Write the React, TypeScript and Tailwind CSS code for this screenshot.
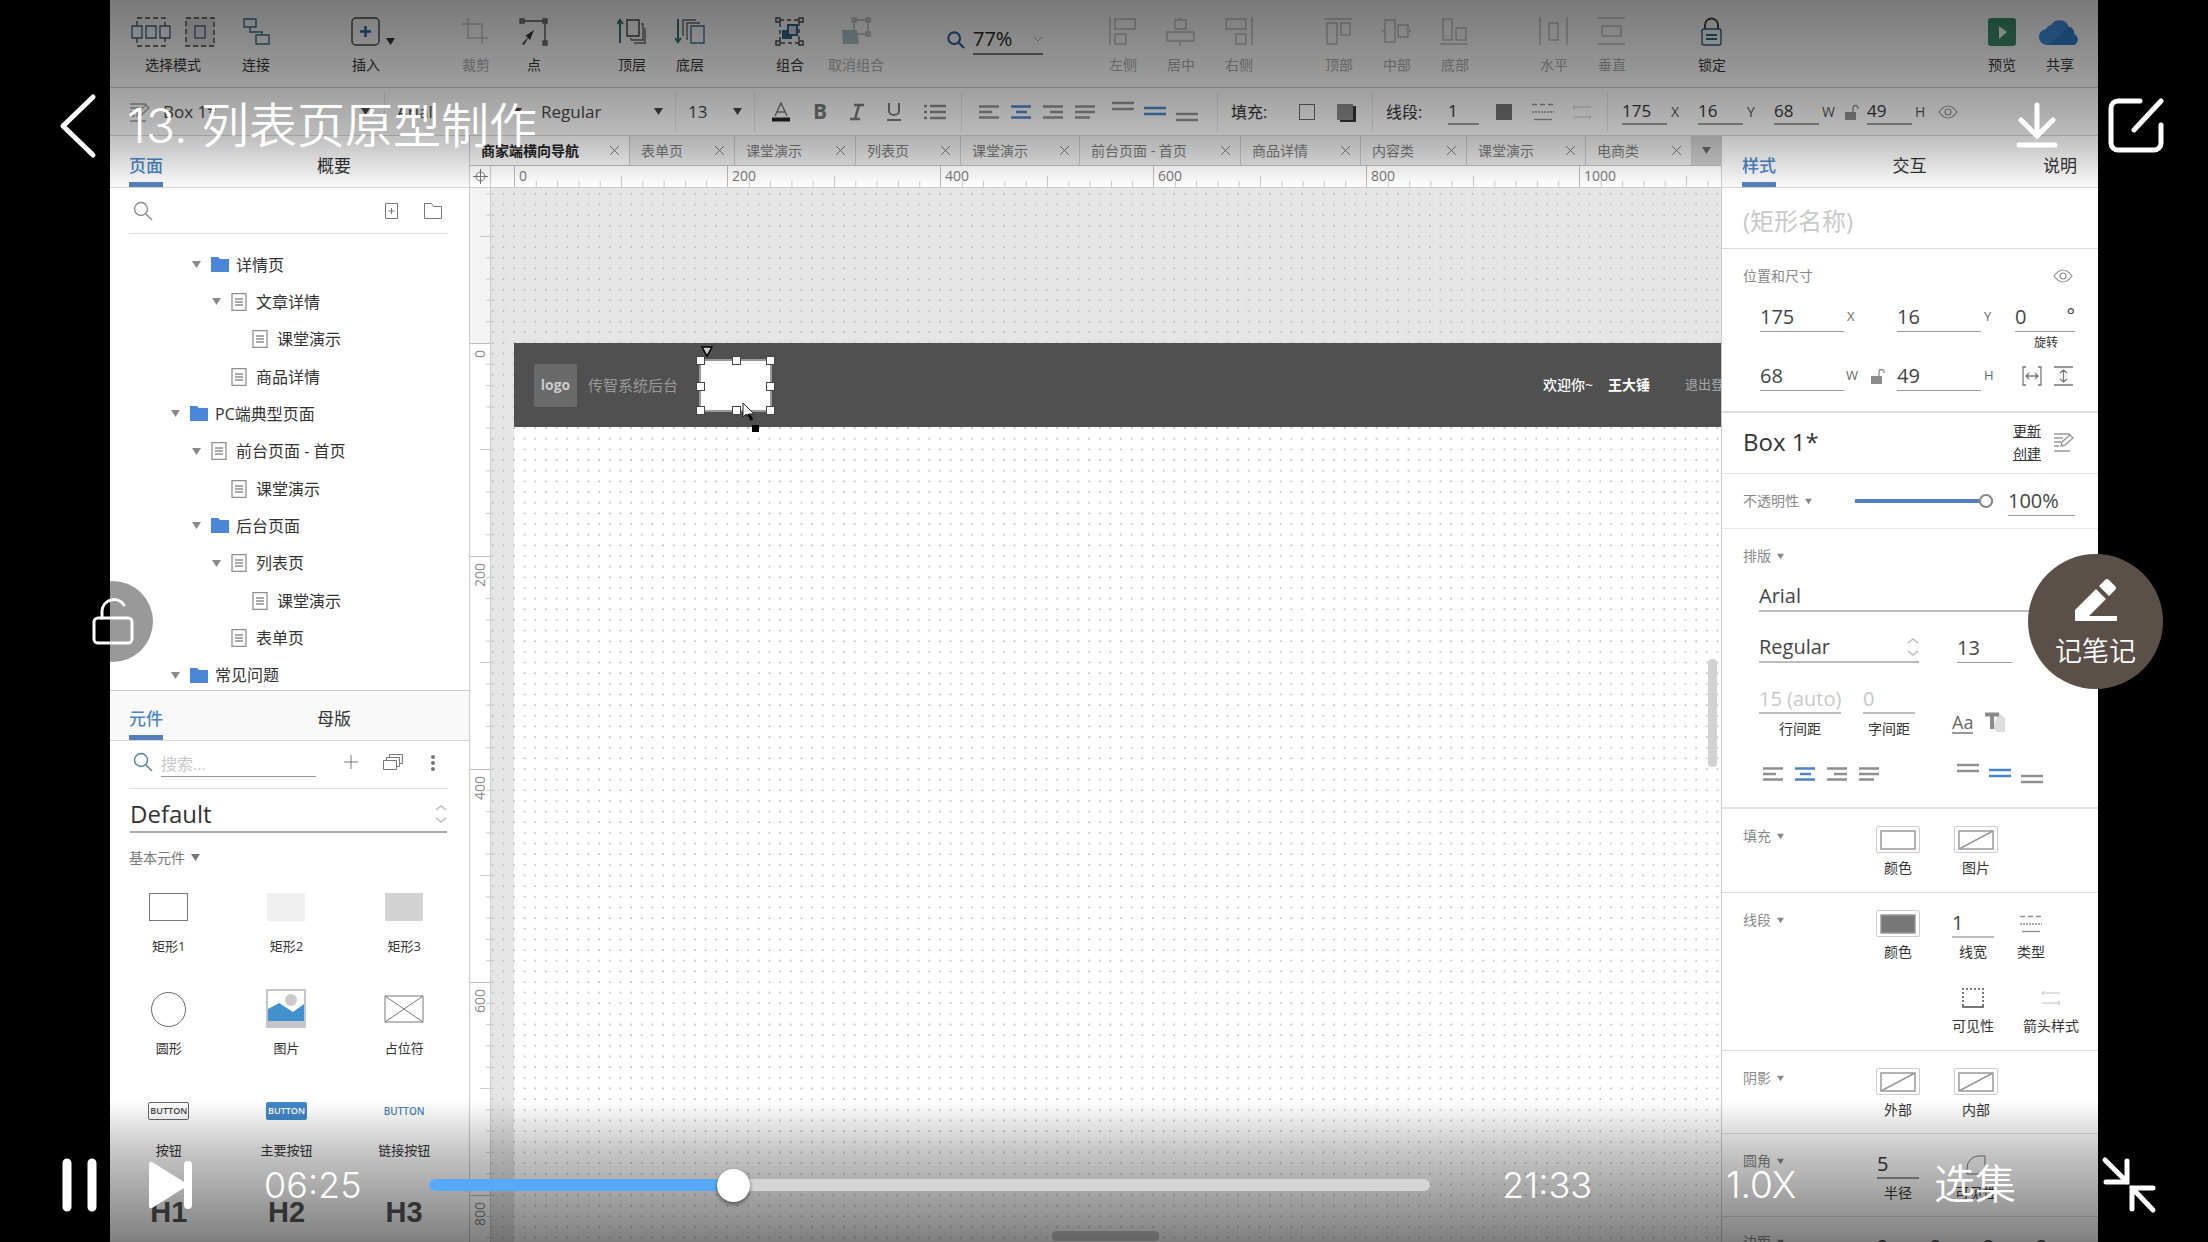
import React, { useState } from "react";

const UI_FONT = "font-['Open_Sans','Noto_Sans_CJK_SC',sans-serif]";
const PLAYER_FONT = "font-['Inter','Noto_Sans_CJK_SC',sans-serif]";

const GREY = "#8c8c8c";
const BLUE = "#4a84c4";

/* ---------- small drawings ---------- */

const Caret = ({ className = "" }: { className?: string }) => (
    <svg width="9" height="7" viewBox="0 0 9 7" className={`shrink-0 pointer-events-none ${className}`} aria-hidden>
        <path d="M0 0h9L4.5 7z" fill="currentColor" />
    </svg>
);

const UpDown = () => (
    <svg width="12" height="20" viewBox="0 0 12 20" fill="none" stroke="#bbb" strokeWidth="1.5" className="shrink-0 pointer-events-none" aria-hidden>
        <path d="M1 6l5-4 5 4M1 14l5 4 5-4" />
    </svg>
);

const EyeIcon = () => (
    <svg width="20" height="14" viewBox="0 0 20 14" fill="none" stroke={GREY} strokeWidth="1.2" aria-hidden>
        <path d="M1 7q9-12 18 0q-9 12-18 0z" />
        <circle cx="10" cy="7" r="3" />
    </svg>
);

const SmallLock = () => (
    <svg width="14" height="16" viewBox="0 0 14 16" aria-hidden>
        <rect x="0" y="8" width="11" height="8" fill={GREY} />
        <path d="M8 8V4a2.5 2.5 0 0 1 5 0v1" fill="none" stroke={GREY} strokeWidth="1.3" />
    </svg>
);

const StylePencil = () => (
    <svg width="22" height="20" viewBox="0 0 22 20" fill="none" stroke="#999" strokeWidth="1.4" aria-hidden>
        <path d="M1 2h16M1 6h9M1 10h7M1 14h5M1 19h16M8 14l1-4 8-7 3 3-8 7z" />
    </svg>
);

const SearchIcon = ({ color = GREY, size = 20, width = 1.4 }: { color?: string; size?: number; width?: number }) => (
    <svg width={size} height={size} viewBox="0 0 20 20" fill="none" stroke={color} strokeWidth={width} aria-hidden>
        <circle cx="8" cy="8" r="6.5" />
        <path d="M13 13l6 6" />
    </svg>
);

const FolderIcon = () => (
    <svg width="18" height="15" viewBox="0 0 18 15" aria-hidden>
        <path d="M0 0h7l2 2h9v13H0z" fill="#4a87d6" />
    </svg>
);

const PageIcon = () => (
    <svg width="16" height="18" viewBox="0 0 16 18" fill="none" stroke="#8f8f8f" strokeWidth="1.3" aria-hidden>
        <path d="M1 .7h14v16.600H1zM4 6h8M4 9h8M4 12h8" />
    </svg>
);

type AlignKind = "left" | "center" | "right" | "justify";
const alignPaths: Record<AlignKind, string> = {
    left: "M0 1.5h20M0 7h13M0 12.5h20",
    center: "M0 1.5h20M5 7h11M0 12.5h20",
    right: "M0 1.5h20M7 7h13M0 12.5h20",
    justify: "M0 1.5h20M0 7h20M0 12.5h15",
};
const AlignIcon = ({ kind }: { kind: AlignKind }) => (
    <svg width="20" height="14" viewBox="0 0 20 14" stroke={kind === "center" ? BLUE : "#8f8f8f"} strokeWidth="2.5" aria-hidden>
        <path d={alignPaths[kind]} />
    </svg>
);

type VAlignKind = "top" | "middle" | "bottom";
const valignY: Record<VAlignKind, number> = { top: 2, middle: 7, bottom: 13 };
const VAlignIcon = ({ kind }: { kind: VAlignKind }) => (
    <svg width="22" height="22" viewBox="0 0 22 22" stroke={kind === "middle" ? BLUE : "#8f8f8f"} strokeWidth="2.5" aria-hidden>
        <path d={`M0 ${valignY[kind]}h22M0 ${valignY[kind] + 6}h22`} />
    </svg>
);

const LineTypeIcon = () => (
    <svg width="22" height="18" viewBox="0 0 22 18" stroke={GREY} strokeWidth="1.3" aria-hidden>
        <path d="M0 1.5h22" strokeDasharray="5 3" />
        <path d="M0 9h22" strokeDasharray="2 1" />
        <path d="M2 16.5h18" />
    </svg>
);

const ArrowStyleIcon = () => (
    <svg width="20" height="14" viewBox="0 0 20 14" fill="none" stroke="#c0c0c0" aria-hidden>
        <path d="M1 2h18M3 0L1 2l2 2M1 12h18M17 10l2 2-2 2" />
    </svg>
);

/* ---------- top toolbar ---------- */

const toolIcons: Record<string, React.ReactNode> = {
    link: <path d="M3 2h12v8H3zM15 18h13v9H15zM9 10v5h12v3" stroke="#3c6b85" />,
    insert: (
        <>
            <rect x="1" y="1" width="27" height="27" rx="4" stroke="#444" />
            <path d="M14.500 9v11M9 14.500h11" stroke="#2c5f9e" strokeWidth="2.500" />
        </>
    ),
    crop: <path d="M7 1v20h20M1 7h20v20" stroke={GREY} />,
    point: (
        <>
            <path d="M3 4h23v22" stroke="#555" />
            <path d="M1 2h4v4H1zM24 2h4v4h-4zM24 24h4v4h-4z" fill="#777" stroke="#666" />
            <path d="M3 27l6-7-3-1 9-6-4 10-2-2-4 7z" fill="#333" stroke="none" />
        </>
    ),
    front: (
        <>
            <path d="M3 26V3M0 7l3-4 3 4" stroke="#2f7670" strokeWidth="2" />
            <path d="M10 3h12v16H10z" stroke="#444" />
            <path d="M24 7h2v16H14v-2M28 11v15H17" stroke="#666" />
        </>
    ),
    back: (
        <>
            <path d="M3 2v23M0 21l3 4 3-4" stroke="#2f7670" strokeWidth="2" />
            <path d="M16 9h13v17H16z" stroke="#3f6f95" />
            <path d="M13 22h-1V6h13M9 18H8V3h13" stroke="#666" />
        </>
    ),
    group: (
        <>
            <path d="M5 3h19v23H5z" stroke="#444" strokeDasharray="4 3" />
            <path d="M1 1h4v4H1zM24 1h4v4h-4zM1 24h4v4H1zM24 24h4v4h-4z" stroke="#444" />
            <path d="M7 13h10v9H7z" fill="#2d6787" stroke="none" />
            <path d="M13 8h9v10h-9z" stroke="#2d5d8d" strokeWidth="2" fill="#c8d4dc" />
        </>
    ),
    ungroup: (
        <>
            <path d="M13 3h14v14H13z" stroke="#777" />
            <path d="M1 13h15l2 14H2z" fill="#5d868d" stroke="none" />
            <path d="M11 1h4v4h-4zM25 1h4v4h-4zM25 15h4v4h-4z" stroke="#777" />
        </>
    ),
    aleft: <path d="M2 0v28M7 2h20v10H7zM7 17h11v10H7z" stroke="#808080" />,
    acenter: <path d="M14 0v2M9 3h11v9H9zM1 15h27v9H1zM14 25v4" stroke="#808080" />,
    aright: <path d="M28 0v28M2 2h20v10H2zM12 17h10v10H12z" stroke="#808080" />,
    atop: <path d="M0 2h28M3 6h10v21H3zM17 6h9v12h-9z" stroke="#808080" />,
    amiddle: <path d="M3 3h10v22H3zM16 8h10v12H16zM0 14h3M26 14h3" stroke="#808080" />,
    abottom: <path d="M0 27h28M3 2h9v21H3zM16 11h10v12H16z" stroke="#808080" />,
    horiz: <path d="M1 0v28M28 0v28M10 6h9v17h-9z" stroke="#808080" />,
    vert: <path d="M1 1h27M1 27h27M5 9h19v10H5z" stroke="#808080" />,
    lock: (
        <>
            <path d="M8 12V8a6 6 0 0 1 13 0v4" stroke="#444" strokeWidth="2" />
            <rect x="5" y="12" width="19" height="16" rx="2" stroke="#2d5d80" />
            <path d="M9 18h11M9 22h11" stroke="#2d6a78" strokeWidth="2" />
        </>
    ),
    preview: (
        <>
            <rect x="1" y="1" width="28" height="28" rx="3" fill="#3a8a68" stroke="none" />
            <path d="M12 9l8 6-8 7z" fill="#e6f2ec" stroke="none" />
        </>
    ),
};

const Tool = ({ icon, label, dim, className = "w-[58px]" }: { icon: string; label: string; dim?: boolean; className?: string }) => (
    <button className={`flex flex-col items-center gap-2 ${dim ? "text-[#a6a6a6]" : "text-[#333]"} ${className}`}>
        <svg width="30" height="30" viewBox="0 0 30 30" fill="none" strokeWidth="1.4" className={dim ? "opacity-50" : ""} aria-hidden>
            {toolIcons[icon]}
        </svg>
        <span className="text-sm leading-5 whitespace-nowrap">{label}</span>
    </button>
);

const TopToolbar = () => (
    <div className="flex h-[88px] shrink-0 items-start border-b border-[#c4c4c4] bg-[#f4f4f4] pt-[17px] pr-[9px]">
        <button className="ml-[9px] flex w-[108px] flex-col items-center gap-2 text-[#333]">
            <span className="flex items-center gap-[14px]">
                <svg width="40" height="30" viewBox="0 0 40 30" fill="none" stroke="#444" strokeWidth="1.3" aria-hidden>
                    <path d="M6 9V1h28v8M6 21v8h28v-8" strokeDasharray="5 3" />
                    <path d="M1 9h10v12H1zM15 9h10v12H15zM29 9h10v12H29z" stroke="#3c5f85" />
                </svg>
                <svg width="30" height="30" viewBox="0 0 30 30" fill="none" stroke="#444" strokeWidth="1.3" className="bg-[#e0e0e0]" aria-hidden>
                    <rect x="1" y="1" width="28" height="28" strokeDasharray="5 3" />
                    <rect x="10" y="9" width="10" height="12" stroke="#3c5f85" />
                </svg>
            </span>
            <span className="text-sm leading-5">选择模式</span>
        </button>
        <Tool icon="link" label="连接" className="w-[58px]" />
        <span className="relative ml-[52px]">
            <Tool icon="insert" label="插入" />
            <Caret className="absolute top-[21px] right-0 text-[#333]" />
        </span>
        <Tool icon="crop" label="裁剪" dim className="ml-[52px] w-[58px]" />
        <Tool icon="point" label="点" />
        <Tool icon="front" label="顶层" className="ml-[40px] w-[58px]" />
        <Tool icon="back" label="底层" />
        <Tool icon="group" label="组合" className="ml-[42px] w-[58px]" />
        <Tool icon="ungroup" label="取消组合" dim className="w-[74px]" />
        <label className="ml-[54px] mt-[8px] flex items-center gap-2">
            <SearchIcon color="#2f5e9c" size={18} width={2.4} />
            <span className="flex w-[70px] items-center border-b-2 border-[#777]">
                <select aria-label="缩放" className="w-full appearance-none text-xl leading-7 text-[#222]">
                    <option>77%</option>
                </select>
                <svg width="10" height="6" viewBox="0 0 10 6" fill="none" stroke="#999" className="shrink-0" aria-hidden>
                    <path d="M1 1l4 4 4-4" />
                </svg>
            </span>
        </label>
        <Tool icon="aleft" label="左侧" dim className="ml-[51px] w-[58px]" />
        <Tool icon="acenter" label="居中" dim />
        <Tool icon="aright" label="右侧" dim />
        <Tool icon="atop" label="顶部" dim className="ml-[42px] w-[58px]" />
        <Tool icon="amiddle" label="中部" dim />
        <Tool icon="abottom" label="底部" dim />
        <Tool icon="horiz" label="水平" dim className="ml-[41px] w-[58px]" />
        <Tool icon="vert" label="垂直" dim />
        <Tool icon="lock" label="锁定" className="ml-[42px] w-[58px]" />
        <Tool icon="preview" label="预览" className="ml-auto w-[58px]" />
        <button className="flex w-[58px] flex-col items-center gap-2 text-[#333]">
            <svg width="42" height="30" viewBox="0 0 42 30" aria-hidden>
                <path d="M9 28a8 8 0 0 1-2-16 7 7 0 0 1 5-4 10 10 0 0 1 18 2 6 6 0 0 1 5 7 6 6 0 0 1 0 11z" fill="#3d8ad8" />
                <path d="M9 28L30 10a6 6 0 0 1 5 7 6 6 0 0 1 0 11z" fill="#3079c4" />
            </svg>
            <span className="text-sm leading-5">共享</span>
        </button>
    </div>
);

/* ---------- format bar ---------- */

const BarSelect = ({ value, label, className }: { value: string; label: string; className: string }) => (
    <span className={`flex items-center ${className}`}>
        <select aria-label={label} className="min-w-0 flex-1 appearance-none text-[17px] text-[#444]">
            <option>{value}</option>
        </select>
        <Caret className="text-[#444]" />
    </span>
);

const BarNumber = ({ value, label }: { value: string; label: string }) => (
    <input aria-label={label} defaultValue={value} className="w-[45px] border-b-2 border-[#999] text-[17px] leading-6 text-[#333] outline-none" />
);

const FormatBar = () => (
    <div className="flex h-12 shrink-0 items-center border-b border-[#cfcfcf] bg-[#f4f4f4] text-[#333] *:h-10 *:shrink-0">
        <div className="flex w-[275px] items-center gap-3 border-r border-[#ddd] pl-[19px] pr-[14px]">
            <StylePencil />
            <BarSelect value="Box 1*" label="样式" className="flex-1" />
        </div>
        <div className="flex w-[291px] items-center gap-[19px] border-r border-[#ddd] pl-[12px] pr-[12px]">
            <BarSelect value="Arial" label="字体" className="w-[125px]" />
            <BarSelect value="Regular" label="字形" className="flex-1" />
        </div>
        <div className="flex w-[79px] items-center border-r border-[#ddd] pl-[12px] pr-[12px]">
            <BarSelect value="13" label="字号" className="flex-1" />
        </div>
        <div className="flex w-[207px] items-center justify-between border-r border-[#ddd] pl-[17px] pr-[15px] text-[#777]">
            <button aria-label="文字颜色">
                <svg width="18" height="20" viewBox="0 0 18 20" fill="none" aria-hidden>
                    <path d="M3 14L9 1l6 13M5 10h8" stroke="#777" strokeWidth="1.500" />
                    <path d="M0 17.500h18" stroke="#222" strokeWidth="4" />
                </svg>
            </button>
            <button className="text-[21px] font-bold">B</button>
            <button aria-label="斜体">
                <svg width="14" height="18" viewBox="0 0 14 18" stroke="#777" strokeWidth="2.500" aria-hidden>
                    <path d="M4 2h10M0 16h10M9 2L5 16" />
                </svg>
            </button>
            <button aria-label="下划线">
                <svg width="14" height="18" viewBox="0 0 14 18" fill="none" stroke="#777" strokeWidth="2" aria-hidden>
                    <path d="M2 0v8a5 4 0 0 0 10 0V0M0 17h14" />
                </svg>
            </button>
            <button aria-label="项目符号">
                <svg width="22" height="16" viewBox="0 0 22 16" stroke="#888" strokeWidth="2.500" aria-hidden>
                    <path d="M0 2h3M6 2h16M0 8h3M6 8h16M0 14h3M6 14h16" />
                </svg>
            </button>
        </div>
        <div className="flex w-[256px] items-center gap-[12px] border-r border-[#ddd] pl-[17px]">
            <button aria-label="左对齐"><AlignIcon kind="left" /></button>
            <button aria-label="居中对齐"><AlignIcon kind="center" /></button>
            <button aria-label="右对齐"><AlignIcon kind="right" /></button>
            <button aria-label="两端对齐"><AlignIcon kind="justify" /></button>
            <span className="ml-[5px] flex gap-[10px]">
                <button aria-label="顶部对齐"><VAlignIcon kind="top" /></button>
                <button aria-label="垂直居中"><VAlignIcon kind="middle" /></button>
                <button aria-label="底部对齐"><VAlignIcon kind="bottom" /></button>
            </span>
        </div>
        <div className="flex w-[155px] items-center border-r border-[#ddd] pl-[13px]">
            <span className="w-[68px] text-base">填充:</span>
            <button aria-label="填充颜色" className="h-4 w-4 border border-[#666]" />
            <button aria-label="阴影" className="ml-[22px] h-4 w-4 bg-[#888] shadow-[3px_2px_0_#333]" />
        </div>
        <div className="flex w-[235px] items-center border-r border-[#ddd] pl-[13px]">
            <span className="w-[62px] text-base">线段:</span>
            <input aria-label="线宽" defaultValue="1" className="w-[31px] border-b-2 border-[#999] text-[17px] leading-6 outline-none" />
            <button aria-label="线段颜色" className="ml-[17px] h-4 w-4 bg-[#707070]" />
            <button aria-label="线段类型" className="ml-[20px]"><LineTypeIcon /></button>
            <button aria-label="箭头样式" className="ml-[18px]"><ArrowStyleIcon /></button>
        </div>
        <div className="flex items-center pl-[14px] text-sm text-[#555]">
            <BarNumber value="175" label="X" />
            <span className="w-[31px] pl-[4px]">X</span>
            <BarNumber value="16" label="Y" />
            <span className="w-[31px] pl-[4px]">Y</span>
            <BarNumber value="68" label="W" />
            <span className="w-[26px] pl-[3px]">W</span>
            <span className="w-[22px]"><SmallLock /></span>
            <BarNumber value="49" label="H" />
            <span className="w-[26px] pl-[3px]">H</span>
            <EyeIcon />
        </div>
    </div>
);

/* ---------- left column ---------- */

type TreeItem = { level: 1 | 2 | 3 | 4; name: string; folder?: boolean; open?: boolean };

const treeItems: TreeItem[] = [
    { level: 2, name: "详情页", folder: true, open: true },
    { level: 3, name: "文章详情", open: true },
    { level: 4, name: "课堂演示" },
    { level: 3, name: "商品详情" },
    { level: 1, name: "PC端典型页面", folder: true, open: true },
    { level: 2, name: "前台页面 - 首页", open: true },
    { level: 3, name: "课堂演示" },
    { level: 2, name: "后台页面", folder: true, open: true },
    { level: 3, name: "列表页", open: true },
    { level: 4, name: "课堂演示" },
    { level: 3, name: "表单页" },
    { level: 1, name: "常见问题", folder: true, open: true },
];

const levelPadding = { 1: "pl-[61px]", 2: "pl-[82px]", 3: "pl-[102px]", 4: "pl-[123px]" };

const PanelTabs = ({ first, second, className }: { first: string; second: string; className: string }) => (
    <div className={`flex items-end border-b border-[#d4d4d4] pl-[19px] text-[17px] text-[#333] ${className}`}>
        <button className="h-[37px] border-b-[5px] border-[#5580bd] font-medium text-[#4a84c4]">{first}</button>
        <button className="ml-[154px] h-[37px] border-b-[5px] border-transparent">{second}</button>
    </div>
);

const PagesPanel = () => (
    <section className="h-[554px] shrink-0 overflow-hidden">
        <PanelTabs first="页面" second="概要" className="h-[52px] bg-[#f9f9f9]" />
        <div className="mr-[21px] ml-[19px] flex h-[46px] items-center border-b border-[#ddd] pl-1">
            <SearchIcon />
            <button aria-label="添加页面" className="ml-auto">
                <svg width="13" height="16" viewBox="0 0 13 16" fill="none" stroke="#777" aria-hidden>
                    <path d="M.5.5h12v15H.5zM6.500 5v6M3.500 8h6" />
                </svg>
            </button>
            <button aria-label="添加文件夹" className="mr-[6px] ml-[26px]">
                <svg width="18" height="16" viewBox="0 0 18 16" fill="none" stroke="#777" aria-hidden>
                    <path d="M.5.5h7l2 3h8v12H.5z" />
                </svg>
            </button>
        </div>
        <ul className="mt-[12px] flex h-[448px] flex-col text-base text-[#333]">
            {treeItems.map((item, i) => (
                <li key={i} className={`flex flex-1 items-center ${levelPadding[item.level]}`}>
                    <span className="w-[19px] shrink-0 text-[#8a8a8a]">{item.open && <Caret />}</span>
                    <span className="w-[25px] shrink-0">{item.folder ? <FolderIcon /> : <PageIcon />}</span>
                    {item.name}
                </li>
            ))}
        </ul>
    </section>
);

const widgets: { name: string; art: React.ReactNode }[] = [
    { name: "矩形1", art: <span className="h-[28px] w-[39px] border border-[#777]" /> },
    { name: "矩形2", art: <span className="h-[28px] w-[38px] bg-[#f0f0f0]" /> },
    { name: "矩形3", art: <span className="h-[28px] w-[38px] bg-[#d3d3d3]" /> },
    { name: "圆形", art: <span className="h-[35px] w-[35px] rounded-full border border-[#666]" /> },
    {
        name: "图片",
        art: (
            <svg width="40" height="40" viewBox="0 0 40 40" aria-hidden>
                <rect x="1" y="1" width="38" height="37" fill="#fff" stroke="#c4c4cc" strokeWidth="2" />
                <rect x="1" y="32" width="38" height="6" fill="#c4c4cc" />
                <circle cx="25" cy="11" r="6" fill="#cbc8cb" />
                <path d="M2 20l11-6 14 9 11-8v17H2z" fill="#4390cf" />
            </svg>
        ),
    },
    {
        name: "占位符",
        art: (
            <svg width="40" height="28" viewBox="0 0 40 28" fill="none" stroke="#777" aria-hidden>
                <path d="M1 1h38v26H1zM1 1l38 26M39 1L1 27" />
            </svg>
        ),
    },
    { name: "按钮", art: <span className="rounded-xs border border-[#666] px-[1px] text-[9px] leading-4 font-semibold text-[#444]">BUTTON</span> },
    { name: "主要按钮", art: <span className="rounded-xs bg-[#4187c8] px-[2px] text-[9px] leading-[18px] font-semibold text-white">BUTTON</span> },
    { name: "链接按钮", art: <span className="text-[10px] leading-4 font-semibold text-[#4a7fb5]">BUTTON</span> },
];

const LibraryPanel = () => (
    <section className="flex-1 border-t border-[#ccc]">
        <PanelTabs first="元件" second="母版" className="h-[50px] bg-[#f9f9f9]" />
        <div className="mr-[21px] ml-[19px] flex h-[48px] items-start border-b border-[#e0e0e0] pt-[11px] pl-[4px]">
            <SearchIcon color="#4f8098" />
            <input aria-label="搜索元件" placeholder="搜索..." className="ml-[8px] w-[155px] border-b border-[#999] text-base leading-6 outline-none placeholder:text-[#c8c8c8]" />
            <button aria-label="添加元件库" className="mt-[3px] ml-[28px]">
                <svg width="14" height="14" viewBox="0 0 14 14" stroke="#777" aria-hidden><path d="M7 0v14M0 7h14" /></svg>
            </button>
            <button aria-label="元件库" className="mt-[2px] ml-[25px]">
                <svg width="20" height="16" viewBox="0 0 20 16" fill="none" stroke="#777" aria-hidden>
                    <path d="M.5 6.500h13v9H.5zM3.500 6V3.500h13v9H14M6.500 3V.5h13v9H17" />
                </svg>
            </button>
            <button aria-label="更多" className="mt-[3px] ml-[27px]">
                <svg width="6" height="16" viewBox="0 0 6 16" fill="#777" aria-hidden>
                    <circle cx="3" cy="2" r="2" /><circle cx="3" cy="8" r="2" /><circle cx="3" cy="14" r="2" />
                </svg>
            </button>
        </div>
        <div className="mr-[22px] ml-[20px] flex h-[44px] items-center border-b-2 border-[#aaa] pt-[8px]">
            <select aria-label="元件库选择" className="flex-1 appearance-none text-2xl leading-8 text-[#333]">
                <option>Default</option>
            </select>
            <UpDown />
        </div>
        <button className="ml-[19px] flex h-[45px] items-center gap-[6px] pt-[4px] text-sm text-[#777]">
            基本元件 <Caret className="text-[#777]" />
        </button>
        <div className="grid grid-cols-3 pr-[6px] text-[13px] text-[#333]">
            {widgets.map((w) => (
                <div key={w.name} className="flex h-[102px] flex-col items-center">
                    <div className="flex h-[58px] items-center">{w.art}</div>
                    <span className="mt-[2px] leading-4">{w.name}</span>
                </div>
            ))}
            {["H1", "H2", "H3"].map((h) => (
                <div key={h} className="flex h-[58px] items-center justify-center font-['Liberation_Sans',sans-serif] text-[29px] font-bold text-[#555]">
                    {h}
                </div>
            ))}
        </div>
    </section>
);

/* ---------- canvas ---------- */

const docTabs = [
    { name: "商家端横向导航", width: "w-[160px]" },
    { name: "表单页", width: "w-[105px]" },
    { name: "课堂演示", width: "w-[121px]" },
    { name: "列表页", width: "w-[105px]" },
    { name: "课堂演示", width: "w-[119px]" },
    { name: "前台页面 - 首页", width: "w-[161px]" },
    { name: "商品详情", width: "w-[120px]" },
    { name: "内容类", width: "w-[106px]" },
    { name: "课堂演示", width: "w-[119px]" },
    { name: "电商类", width: "w-[106px]" },
];

// nine minor marks between two labels, the fifth one is longer
const marks = [1, 2, 3, 4, 5, 6, 7, 8, 9];
const TicksX = () => (
    <svg width="213" height="22" viewBox="0 0 200 22" preserveAspectRatio="none" stroke="#ccc" className="absolute inset-0" aria-hidden>
        {marks.map((m) => <path key={m} d={`M${m * 20} ${m === 5 ? 10 : 15}V22`} />)}
    </svg>
);
const TicksY = () => (
    <svg width="22" height="213" viewBox="0 0 22 200" preserveAspectRatio="none" stroke="#ccc" className="absolute bottom-0 left-0" aria-hidden>
        {marks.map((m) => <path key={m} d={`M${m === 5 ? 10 : 16} ${m * 20}H22`} />)}
    </svg>
);

const handles = [
    "-top-[5px] -left-[5px]", "-top-[5px] left-[31px]", "-top-[5px] -right-[5px]",
    "top-[21px] -left-[5px]", "top-[21px] -right-[5px]",
    "-bottom-[5px] -left-[5px]", "-bottom-[5px] left-[31px]", "-bottom-[5px] -right-[5px]",
];

const Canvas = () => (
    <main className="flex min-w-0 flex-1 flex-col border-x border-[#c9c9c9]">
        <div className="flex h-[30px] shrink-0 border-b border-[#bbb] bg-[#e6e6e6] text-sm">
            {docTabs.map((tab, i) => (
                <div key={i} className={`flex items-center justify-between border-r border-[#c4c4c4] pr-[10px] pl-[11px] whitespace-nowrap ${tab.width} ${i === 0 ? "bg-[#f6f6f6] font-bold text-[#222]" : "text-[#777]"}`}>
                    <button>{tab.name}</button>
                    <button aria-label="关闭">
                        <svg width="9" height="9" viewBox="0 0 9 9" stroke="#777" aria-hidden><path d="M0 0l9 9M9 0L0 9" /></svg>
                    </button>
                </div>
            ))}
            <button aria-label="更多标签" className="flex flex-1 items-center justify-center bg-[#c9c9c9] text-[#666]"><Caret /></button>
        </div>
        <div className="flex h-[22px] shrink-0 overflow-hidden border-b border-[#ccc] bg-white text-sm text-[#777]">
            <div className="flex w-[21px] shrink-0 items-center justify-center border-r border-[#ccc]">
                <svg width="15" height="15" viewBox="0 0 15 15" fill="none" stroke="#777" aria-hidden>
                    <circle cx="7.500" cy="7.500" r="4.500" /><path d="M7.500 0v15M0 7.500h15" />
                </svg>
            </div>
            <div className="w-[23px] shrink-0" />
            {["0", "200", "400", "600", "800", "1000"].map((n) => (
                <div key={n} className="relative w-[213px] shrink-0 border-l border-[#bbb] pl-[4px] leading-5">
                    <TicksX />
                    {n}
                </div>
            ))}
        </div>
        <div className="flex min-h-0 flex-1">
            <div className="flex w-[21px] shrink-0 flex-col overflow-hidden border-r border-[#ccc] bg-white text-sm text-[#888]">
                <div className="relative h-[155px] shrink-0 overflow-hidden bg-[#f4f4f4]"><TicksY /></div>
                {["0", "200", "400", "600", "800"].map((n) => (
                    <div key={n} className="relative h-[213px] shrink-0 border-t border-[#bbb]">
                        <TicksY />
                        <span className="block rotate-180 pb-[6px] leading-5 [writing-mode:vertical-rl]">{n}</span>
                    </div>
                ))}
            </div>
            <div className="relative min-w-0 flex-1 overflow-hidden bg-[#e5e5e5]">
                <div className="absolute top-[155px] right-0 bottom-0 left-[23px] bg-white" />
                <svg className="absolute inset-0 h-full w-full" aria-hidden>
                    <pattern id="grid" x="18" y="150" width="10.65" height="10.65" patternUnits="userSpaceOnUse">
                        <circle cx="5" cy="5" r=".9" fill="#b4b4b4" />
                    </pattern>
                    <rect width="100%" height="100%" fill="url(#grid)" />
                </svg>
                <div className="relative mt-[155px] ml-[23px] flex h-[84px] items-center bg-[#505050] pl-[20px] whitespace-nowrap">
                    <div className="flex h-[43px] w-[43px] shrink-0 items-center justify-center rounded-xs bg-[#6a6a6a] text-sm font-bold text-[#ccc]">logo</div>
                    <span className="ml-[11px] text-[15px] text-[#999]">传智系统后台</span>
                    <div className="relative ml-[21px] h-[53px] w-[73px] shrink-0 border-2 border-[#999] bg-white">
                        {handles.map((pos) => <span key={pos} className={`absolute h-[9px] w-[9px] border border-[#444] bg-white ${pos}`} />)}
                        <svg width="12" height="11" viewBox="0 0 12 11" className="absolute -top-[15px] left-0" aria-hidden>
                            <path d="M1 1h10L6 10z" fill="#ccc" stroke="#000" strokeWidth="1.500" />
                        </svg>
                        <svg width="20" height="32" viewBox="0 0 20 32" className="absolute top-[41px] left-[41px]" aria-hidden>
                            <path d="M1 1v14l3-3 3 6 3-1-2-5h4z" fill="#fff" stroke="#222" />
                            <path d="M6 12l4 6" stroke="#000" strokeWidth="3" />
                            <path d="M10 23h7v7h-7z" fill="#000" />
                        </svg>
                    </div>
                    <span className="ml-auto text-sm font-medium text-white">欢迎你~</span>
                    <span className="ml-[15px] text-sm font-bold text-white">王大锤</span>
                    <span className="ml-[35px] w-[36px] overflow-hidden text-[13px] text-[#aaa]">退出登录</span>
                </div>
                <div className="absolute top-[471px] right-[4px] h-[108px] w-[9px] rounded-sm bg-[#d2d2d2]" />
                <div className="absolute bottom-[1px] left-[561px] h-[10px] w-[107px] rounded-sm bg-[#cacaca]" />
            </div>
        </div>
    </main>
);

/* ---------- right column ---------- */

const Field = ({ value, label, className }: { value: string; label: string; className: string }) => (
    <input aria-label={label} defaultValue={value} className={`h-[30px] border-b border-[#999] text-xl leading-7 text-[#444] outline-none ${className}`} />
);

const Heading = ({ children, className = "" }: { children: React.ReactNode; className?: string }) => (
    <button className={`flex h-5 shrink-0 items-center gap-[6px] text-sm text-[#888] ${className}`}>
        {children}
        <Caret className="w-[7px] text-[#888]" />
    </button>
);

const Swatch = ({ label, kind = "plain" }: { label: string; kind?: "plain" | "none" | "dark" }) => (
    <button className="flex w-[78px] shrink-0 flex-col items-center gap-[5px] text-sm leading-5">
        <span className="flex h-[27px] w-[44px] items-center justify-center rounded-xs border border-[#ccc] bg-white">
            <svg width="36" height="20" viewBox="0 0 36 20" fill={kind === "dark" ? "#777" : "none"} stroke="#999" strokeWidth="1.500" aria-hidden>
                <path d={kind === "none" ? "M1 1h34v18H1zM1 19L35 1" : "M1 1h34v18H1z"} />
            </svg>
        </span>
        {label}
    </button>
);

const StylePanel = () => (
    <aside className="flex w-[376px] shrink-0 flex-col overflow-hidden bg-white text-[#333]">
        <div className="flex h-[52px] shrink-0 items-end justify-between border-b border-[#d4d4d4] bg-[#f9f9f9] pr-[21px] pl-[20px] text-[17px]">
            <button className="h-[37px] border-b-[5px] border-[#5580bd] font-medium text-[#4a84c4]">样式</button>
            <button className="h-[37px] border-b-[5px] border-transparent">交互</button>
            <button className="h-[37px] border-b-[5px] border-transparent">说明</button>
        </div>
        <div className="flex h-[61px] shrink-0 items-center border-b border-[#ddd] pt-[5px] pl-[21px]">
            <input aria-label="名称" placeholder="(矩形名称)" className="w-full text-2xl outline-none placeholder:text-[#c9c9c9]" />
        </div>

        <div className="h-[164px] shrink-0 border-b-2 border-[#ddd] pt-[17px]">
            <div className="flex h-5 items-center justify-between pr-[25px] pl-[21px] text-sm text-[#888]">
                位置和尺寸 <EyeIcon />
            </div>
            <div className="mt-[16px] flex items-center pl-[38px] text-[13px] text-[#666]">
                <Field value="175" label="X 坐标" className="w-[84px]" />
                <span className="w-[53px] pl-[3px]">X</span>
                <Field value="16" label="Y 坐标" className="w-[84px]" />
                <span className="w-[34px] pl-[3px]">Y</span>
                <span className="flex h-[30px] w-[60px] border-b border-[#999] text-xl leading-7 text-[#444]">
                    <input aria-label="旋转" defaultValue="0" className="min-w-0 flex-1 outline-none" />
                    <span>°</span>
                </span>
            </div>
            <div className="flex h-[29px] justify-end pt-[3px] pr-[40px] text-xs leading-4">旋转</div>
            <div className="flex items-center pl-[38px] text-[13px] text-[#666]">
                <Field value="68" label="宽度" className="w-[84px]" />
                <span className="w-[27px] pl-[2px]">W</span>
                <span className="w-[26px]"><SmallLock /></span>
                <Field value="49" label="高度" className="w-[84px]" />
                <span className="w-[41px] pl-[3px]">H</span>
                <svg width="52" height="20" viewBox="0 0 52 20" fill="none" stroke="#777" strokeWidth="1.300" aria-hidden>
                    <path d="M4 1H1v18h3M16 1h3v18h-3M4 10h12M7 7l-3 3 3 3M13 7l3 3-3 3M32 1h19M32 19h19M41.500 4v12M38 7l3.500-3L45 7M38 13l3.500 3 3.500-3" />
                </svg>
            </div>
        </div>

        <div className="flex h-[61px] shrink-0 items-center border-b border-[#e4e4e4] pr-[23px] pb-[2px] pl-[21px]">
            <span className="flex-1 text-2xl">Box 1*</span>
            <span className="mr-[12px] flex flex-col text-sm leading-[23px] underline">
                <a href="#update">更新</a>
                <a href="#create">创建</a>
            </span>
            <StylePencil />
        </div>

        <div className="flex h-[55px] shrink-0 items-center border-b border-[#e8e8e8] pl-[21px]">
            <Heading className="w-[112px]">不透明性</Heading>
            <input
                type="range"
                aria-label="不透明性"
                defaultValue={100}
                className="h-[14px] w-[138px] appearance-none bg-[linear-gradient(#5580bd,#5580bd)] bg-[length:100%_4px] bg-center bg-no-repeat [&::-webkit-slider-thumb]:h-[14px] [&::-webkit-slider-thumb]:w-[14px] [&::-webkit-slider-thumb]:appearance-none [&::-webkit-slider-thumb]:rounded-full [&::-webkit-slider-thumb]:border-2 [&::-webkit-slider-thumb]:border-[#888] [&::-webkit-slider-thumb]:bg-white"
            />
            <Field value="100%" label="不透明度" className="ml-[15px] w-[67px]" />
        </div>

        <div className="h-[280px] shrink-0 border-b-2 border-[#e4e4e4] pt-[17px]">
            <Heading className="ml-[21px]">排版</Heading>
            <div className="mr-[23px] ml-[37px] mt-[16px] border-b-2 border-[#bbb]">
                <select aria-label="字体" className="block w-full appearance-none text-xl leading-7 text-[#444]"><option>Arial</option></select>
            </div>
            <div className="mt-[21px] flex pl-[37px]">
                <span className="flex w-[160px] items-center border-b-2 border-[#bbb]">
                    <select aria-label="字形" className="min-w-0 flex-1 appearance-none text-xl leading-7 text-[#444]"><option>Regular</option></select>
                    <UpDown />
                </span>
                <Field value="13" label="字号" className="ml-[38px] w-[55px]" />
            </div>
            <div className="mt-[21px] flex pl-[37px] text-sm leading-5">
                <label className="flex w-[82px] flex-col items-center gap-[5px]">
                    <input placeholder="15 (auto)" className="h-[30px] w-full border-b-2 border-[#bbb] text-xl outline-none placeholder:text-[#c8c8c8]" />
                    行间距
                </label>
                <label className="ml-[22px] flex w-[52px] flex-col items-center gap-[5px]">
                    <input placeholder="0" className="h-[30px] w-full border-b-2 border-[#bbb] text-xl outline-none placeholder:text-[#c8c8c8]" />
                    字间距
                </label>
                <button className="mt-[28px] ml-[37px] h-[22px] border-b-2 border-[#999] text-lg leading-5 text-[#666]">Aa</button>
                <button aria-label="文字阴影" className="mt-[28px] ml-[12px] h-[20px]">
                    <svg width="22" height="20" viewBox="0 0 22 20" fill="none" aria-hidden>
                        <path d="M14 1l6 5v14h-8l-5-4z" fill="#ddd" />
                        <path d="M0 2.500h14M7 2v15" stroke="#8a8a8a" strokeWidth="4" />
                    </svg>
                </button>
            </div>
            <div className="mt-[24px] flex items-center gap-[12px] pl-[41px]">
                <button aria-label="左对齐"><AlignIcon kind="left" /></button>
                <button aria-label="居中对齐"><AlignIcon kind="center" /></button>
                <button aria-label="右对齐"><AlignIcon kind="right" /></button>
                <button aria-label="两端对齐"><AlignIcon kind="justify" /></button>
                <span className="ml-[66px] flex gap-[10px]">
                    <button aria-label="顶部对齐"><VAlignIcon kind="top" /></button>
                    <button aria-label="垂直居中"><VAlignIcon kind="middle" /></button>
                    <button aria-label="底部对齐"><VAlignIcon kind="bottom" /></button>
                </span>
            </div>
        </div>

        <div className="flex h-[84px] shrink-0 border-b border-[#ddd] pt-[17px] pl-[21px]">
            <Heading className="w-[116px]">填充</Heading>
            <Swatch label="颜色" />
            <Swatch label="图片" kind="none" />
        </div>

        <div className="h-[158px] shrink-0 border-b border-[#ddd] pt-[17px] pl-[21px]">
            <div className="flex">
                <Heading className="w-[116px]">线段</Heading>
                <Swatch label="颜色" kind="dark" />
                <label className="flex w-[72px] flex-col items-center gap-[4px] text-sm leading-5">
                    <input defaultValue="1" className="h-[28px] w-[42px] border-b-2 border-[#bbb] text-xl text-[#444] outline-none" />
                    线宽
                </label>
                <button className="flex w-[44px] flex-col items-center gap-[5px] text-sm leading-5">
                    <span className="flex h-[27px] items-center"><LineTypeIcon /></span>
                    类型
                </button>
            </div>
            <div className="mt-[22px] flex justify-end pr-[8px] text-sm leading-5">
                <button className="flex w-[78px] flex-col items-center gap-[5px]">
                    <span className="flex h-[27px] items-center">
                        <svg width="22" height="20" viewBox="0 0 22 20" fill="none" stroke="#777" strokeWidth="2" aria-hidden>
                            <path d="M1 18V1h20v17" strokeDasharray="2 2" /><path d="M0 19h22" />
                        </svg>
                    </span>
                    可见性
                </button>
                <button className="flex w-[78px] flex-col items-center gap-[5px]">
                    <span className="flex h-[27px] items-center"><ArrowStyleIcon /></span>
                    箭头样式
                </button>
            </div>
        </div>

        <div className="flex h-[83px] shrink-0 border-b border-[#ddd] pt-[17px] pl-[21px]">
            <Heading className="w-[116px]">阴影</Heading>
            <Swatch label="外部" kind="none" />
            <Swatch label="内部" kind="none" />
        </div>

        <div className="flex h-[83px] shrink-0 border-b border-[#ddd] pt-[17px] pl-[21px] text-sm leading-5">
            <Heading className="w-[116px]">圆角</Heading>
            <label className="flex w-[78px] flex-col items-center gap-[4px]">
                <input defaultValue="5" className="h-[28px] w-[42px] border-b-2 border-[#999] text-xl outline-none" />
                半径
            </label>
            <button className="flex w-[78px] flex-col items-center gap-[5px]">
                <span className="flex h-[27px] items-center">
                    <svg width="20" height="20" viewBox="0 0 20 20" fill="none" stroke="#777" aria-hidden><path d="M1 19V13A12 12 0 0 1 13 1h6v12a6 6 0 0 1-6 6z" /></svg>
                </span>
                可见性
            </button>
        </div>

        <div className="flex h-[83px] shrink-0 pt-[15px] pl-[21px]">
            <Heading className="w-[134px]">边距</Heading>
            {["左", "上", "右", "下"].map((side) => <Field key={side} value="2" label={side} className="mr-[11px] w-[42px]" />)}
        </div>
    </aside>
);

/* ---------- video player controls ---------- */

const PlayerControls = () => {
    const [playing, setPlaying] = useState(true);
    const [time, setTime] = useState(385);
    const total = 1293;
    const clock = (s: number) => `${String(Math.floor(s / 60)).padStart(2, "0")}:${String(s % 60).padStart(2, "0")}`;
    const percent = `${(time / total) * 100}%`;

    return (
        <div className={`absolute inset-0 flex flex-col justify-between text-white ${PLAYER_FONT}`}>
            <div className="flex h-[187px] items-start bg-[linear-gradient(to_bottom,rgba(0,0,0,.5),rgba(0,0,0,.36)_45%,rgba(0,0,0,.22)_75%,transparent)] pt-[92px] pr-[44px] pl-[58px]">
                <button aria-label="返回">
                    <svg width="40" height="68" viewBox="0 0 40 68" fill="none" stroke="currentColor" strokeWidth="5" strokeLinecap="round" strokeLinejoin="round" aria-hidden>
                        <path d="M35 5L5 34l30 29" />
                    </svg>
                </button>
                <h1 className="ml-[29px] flex-1 text-[48px] leading-[68px] font-[350]">13. 列表页原型制作</h1>
                <button aria-label="下载" className="mt-[10px]">
                    <svg width="42" height="46" viewBox="0 0 42 46" fill="none" stroke="currentColor" strokeWidth="5" strokeLinecap="round" aria-hidden>
                        <path d="M21 3v30M5 18l16 16 16-16M3 43h36" />
                    </svg>
                </button>
                <button aria-label="笔记" className="mt-[5px] ml-[50px]">
                    <svg width="56" height="56" viewBox="0 0 56 56" fill="none" stroke="currentColor" strokeWidth="5" strokeLinecap="round" aria-hidden>
                        <path d="M32 4H10a7 7 0 0 0-7 7v35a7 7 0 0 0 7 7h36a7 7 0 0 0 7-7V28M26 33L53 4" />
                    </svg>
                </button>
            </div>

            <div className="mb-[45px] flex items-center justify-between pr-[45px] pl-[72px]">
                <button aria-label="解锁" className="flex h-[81px] w-[81px] items-center justify-center rounded-full bg-black/40">
                    <svg width="42" height="48" viewBox="0 0 42 48" fill="none" stroke="currentColor" strokeWidth="3" strokeLinecap="round" aria-hidden>
                        <rect x="2" y="21" width="38" height="25" rx="4" />
                        <path d="M10 21v-7a12 12 0 0 1 22-6" />
                    </svg>
                </button>
                <button className="flex h-[135px] w-[135px] flex-col items-center rounded-full bg-[#5a5049] pt-[25px]">
                    <svg width="42" height="42" viewBox="0 0 42 42" fill="currentColor" aria-hidden>
                        <path d="M0 42V31L21 10l10 10-17 17h28v5zM24 7l6-6q2-2 4 0l6 6q2 2 0 4l-6 6z" />
                    </svg>
                    <span className="mt-[13px] text-[27px] leading-[36px] font-[350]">记笔记</span>
                </button>
            </div>

            <div className="flex h-[142px] items-end bg-[linear-gradient(to_bottom,transparent,rgba(0,0,0,.22)_35%,rgba(0,0,0,.5))] pr-[51px] pl-[62px]">
                <div className="flex h-[114px] flex-1 items-center">
                    <button aria-label={playing ? "暂停" : "播放"} onClick={() => setPlaying(!playing)}>
                        <svg width="36" height="54" viewBox="0 0 36 54" stroke="currentColor" strokeWidth="9" strokeLinecap="round" aria-hidden>
                            <path d={playing ? "M5 5v44M30 5v44" : "M6 6v42l24-21z"} fill="currentColor" />
                        </svg>
                    </button>
                    <button aria-label="下一集" className="ml-[50px]">
                        <svg width="46" height="48" viewBox="0 0 46 48" fill="currentColor" aria-hidden>
                            <path d="M1 3q0-3 3-2l32 20V4q0-4 4-4t4 4v40q0 4-4 4t-4-4V27L4 47q-3 1-3-2z" />
                        </svg>
                    </button>
                    <span className="ml-[70px] w-[165px] text-[36px] font-light">{clock(time)}</span>
                    <div className="relative h-[12px] flex-1 rounded-full bg-[#d9d9d9]/90">
                        <div className="h-full rounded-full bg-[#55aaff]" style={{ width: percent }} />
                        <input
                            type="range"
                            aria-label="播放进度"
                            min={0}
                            max={total}
                            value={time}
                            onChange={(e) => setTime(Number(e.target.value))}
                            className="absolute inset-0 h-full w-full appearance-none bg-transparent [&::-webkit-slider-thumb]:h-[33px] [&::-webkit-slider-thumb]:w-[33px] [&::-webkit-slider-thumb]:appearance-none [&::-webkit-slider-thumb]:rounded-full [&::-webkit-slider-thumb]:bg-white [&::-webkit-slider-thumb]:shadow-[0_2px_4px_rgba(0,0,0,.5)]"
                        />
                    </div>
                    <span className="ml-[72px] w-[224px] text-[36px] font-light">{clock(total)}</span>
                    <button className="w-[207px] text-left text-[37px] font-light">1.0X</button>
                    <button className="w-[84px] text-[41px] font-[350] whitespace-nowrap">选集</button>
                    <button aria-label="退出全屏" className="ml-[84px]">
                        <svg width="56" height="58" viewBox="0 0 56 58" fill="none" stroke="currentColor" strokeWidth="5" strokeLinecap="round" aria-hidden>
                            <path d="M4 4l22 22M26 5v21H5M52 54L31 32M31 53V32h21" />
                        </svg>
                    </button>
                </div>
            </div>
        </div>
    );
};

const App: React.FC = () => (
    <div className="relative h-screen overflow-hidden bg-black px-[110px]">
        <div className={`flex h-full flex-col overflow-hidden bg-white ${UI_FONT}`}>
            <TopToolbar />
            <FormatBar />
            <div className="flex min-h-0 flex-1">
                <aside className="flex w-[359px] shrink-0 flex-col overflow-hidden">
                    <PagesPanel />
                    <LibraryPanel />
                </aside>
                <Canvas />
                <StylePanel />
            </div>
        </div>
        <PlayerControls />
    </div>
);

export default App;
